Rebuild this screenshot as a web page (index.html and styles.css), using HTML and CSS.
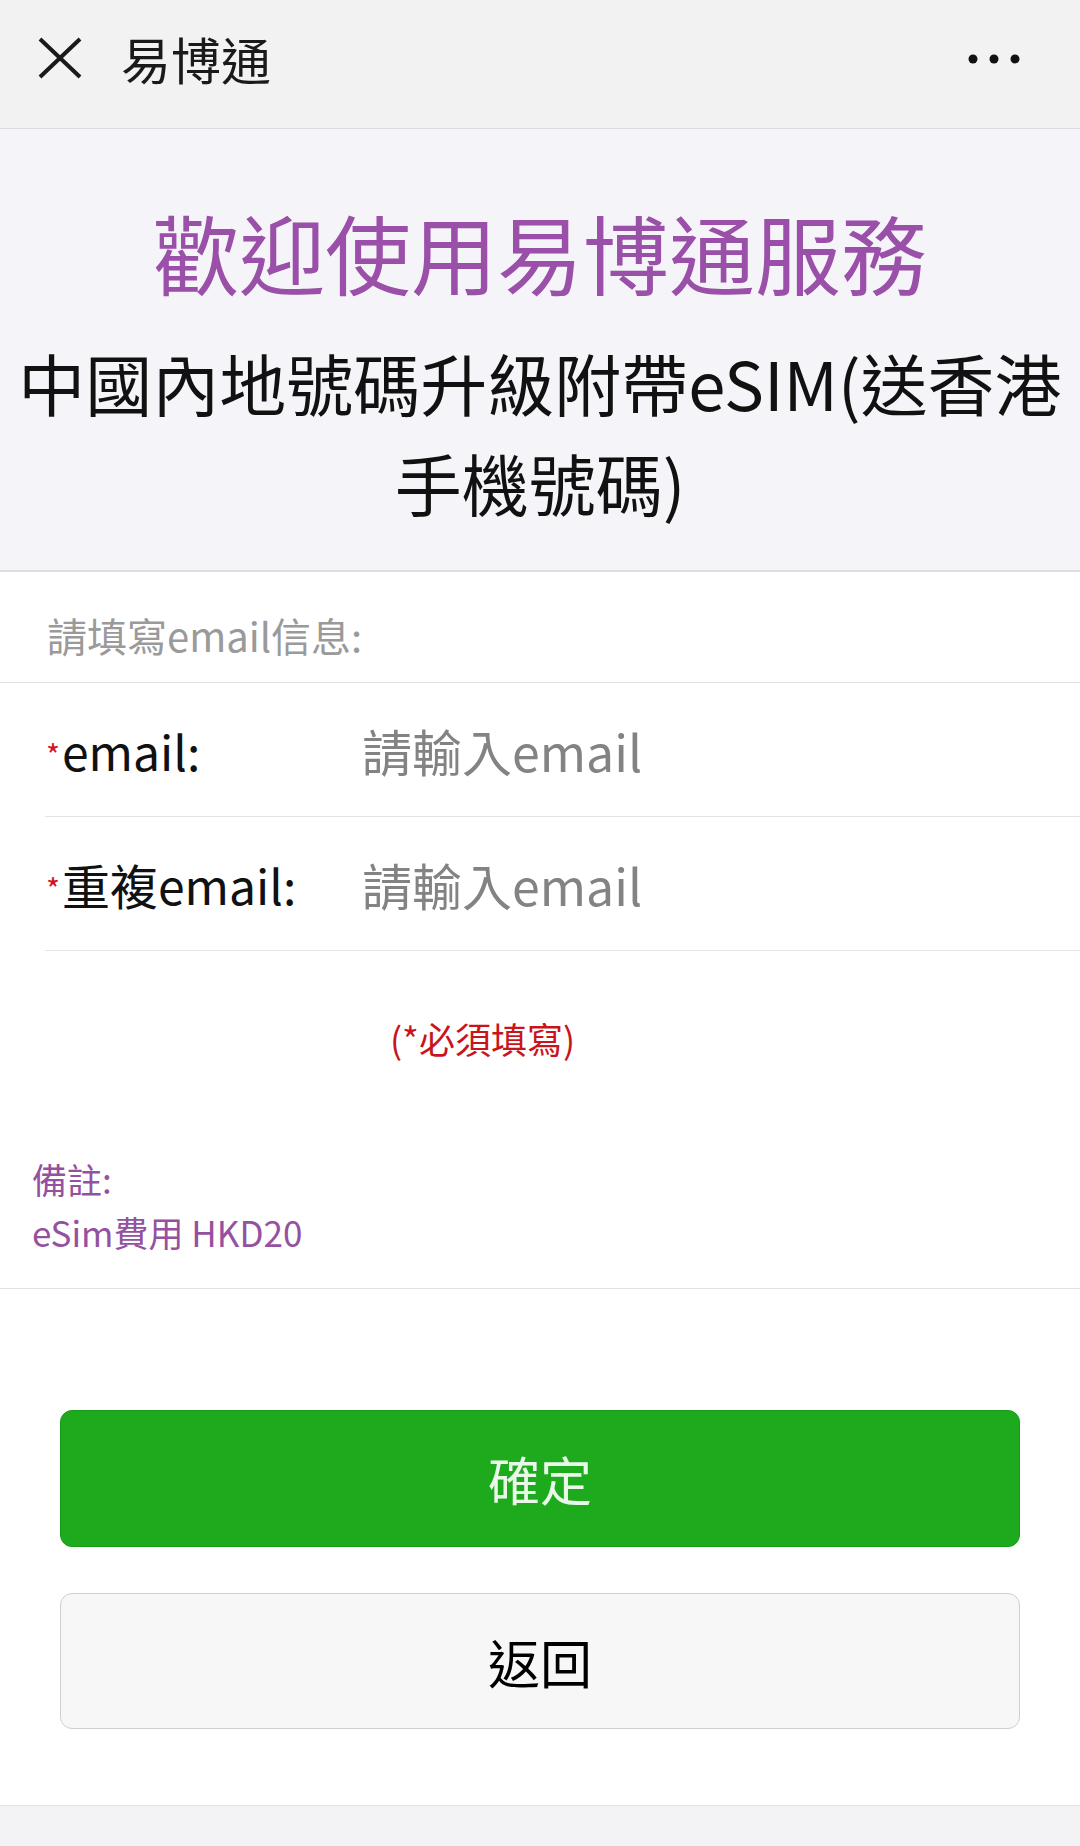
FILE: index.html
```html
<!DOCTYPE html>
<html lang="zh-Hant">
<head>
  <meta charset="UTF-8">
  <meta name="viewport" content="width=device-width, initial-scale=1.0">
  <title>易博通</title>
  <link rel="stylesheet" href="styles.css">
</head>
<body>
  <div class="page">
    <!-- Top bar -->
    <header class="topbar">
      <svg class="close-icon" viewBox="0 0 44 42" width="44" height="42">
        <path d="M2 2 L42 40 M42 2 L2 40" />
      </svg>
      <span class="topbar-title">易博通</span>
      <svg class="more-icon" viewBox="0 0 52 10" width="52" height="10">
        <circle cx="5" cy="5" r="4.5" />
        <circle cx="26" cy="5" r="4.5" />
        <circle cx="47" cy="5" r="4.5" />
      </svg>
    </header>

    <!-- Welcome -->
    <section class="hero">
      <h1 class="hero-title">歡迎使用易博通服務</h1>
      <h2 class="hero-sub">中國內地號碼升級附帶eSIM(送香港<br>手機號碼)</h2>
    </section>

    <!-- Email form -->
    <section class="form">
      <div class="form-caption">請填寫email信息:</div>
      <div class="field">
        <label for="email"><span class="star">*</span>email:</label>
        <input id="email" type="text" placeholder="請輸入email">
      </div>
      <div class="field">
        <label for="email2"><span class="star">*</span>重複email:</label>
        <input id="email2" type="text" placeholder="請輸入email">
      </div>
      <p class="required-note">(*必須填寫)</p>
      <div class="remark">
        備註:<br>
        eSim費用 HKD20
      </div>
    </section>

    <div class="actions">
      <button class="btn btn-primary">確定</button>
      <button class="btn btn-default">返回</button>
    </div>

    <footer class="bottom-bar"></footer>
  </div>
</body>
</html>
```

FILE: styles.css
```css
body {
  margin: 0;
  padding: 0;
  font-family: "Noto Sans CJK TC", "Noto Sans", sans-serif;
  background: #fff;
  color: #111;
}
.page {
  min-height: 100vh;
  display: flex;
  flex-direction: column;
}

/* top bar */
.topbar {
  height: 129px;
  box-sizing: border-box;
  padding: 0 60px 13px 38px;
  display: flex;
  align-items: center;
  background: #f2f2f2;
  border-bottom: 1px solid #dcdcdc;
}
.close-icon path {
  stroke: #1a1a1a;
  stroke-width: 4;
  fill: none;
}
.topbar-title {
  margin-left: 39px;
  font-size: 50px;
  line-height: 60px;
  color: #1a1a1a;
  flex: 1;
}
.more-icon {
  fill: #111;
  margin-top: 3px;
}

/* welcome block */
.hero {
  background: #f5f4f8;
  text-align: center;
  padding: 73px 4px 38px;
  border-bottom: 2px solid #dedce2;
}
.hero-title {
  margin: 0;
  font-size: 86px;
  line-height: 100px;
  font-weight: normal;
  color: #9a4fa8;
}
.hero-sub {
  margin: 30px 0 0;
  font-size: 67px;
  line-height: 100px;
  font-weight: normal;
  color: #111;
  white-space: nowrap;
}

/* form */
.form {
  border-bottom: 1px solid #e2e2e2;
}
.form-caption {
  padding: 38px 47px 22px;
  font-size: 40px;
  line-height: 50px;
  color: #9a9a9a;
  border-bottom: 1px solid #e2e2e2;
}
.field {
  margin-left: 45px;
  height: 133px;
  display: flex;
  align-items: center;
  border-bottom: 1px solid #e4e4e4;
}
.field label {
  width: 317px;
  flex-shrink: 0;
  padding-left: 1px;
  box-sizing: border-box;
  font-size: 48px;
  color: #111;
}
.star {
  color: #d0161e;
  font-size: 30px;
  margin-right: 2px;
  vertical-align: 4px;
}
.field input {
  flex: 1;
  border: none;
  outline: none;
  background: transparent;
  font-family: inherit;
  font-size: 50px;
  padding: 0;
  color: #111;
}
.field input::placeholder {
  color: #838383;
}
.required-note {
  margin: 62px 0 0;
  padding-right: 115px;
  text-align: center;
  font-size: 36px;
  line-height: 50px;
  color: #c8151c;
}
.remark {
  margin-top: 89px;
  padding: 0 32px 30px;
  font-size: 35px;
  line-height: 53px;
  color: #95519f;
}

/* buttons */
.actions {
  padding: 121px 60px 76px;
  display: flex;
  flex-direction: column;
  gap: 46px;
}
.btn {
  height: 137px;
  border-radius: 12px;
  font-family: inherit;
  font-size: 52px;
  cursor: pointer;
}
.btn-primary {
  background: #1dab1d;
  border: 1px solid #179a17;
  color: #eaf8ea;
}
.btn-default {
  height: 136px;
  background: #f7f7f7;
  border: 1px solid #cfcfcf;
  color: #000;
}

.bottom-bar {
  flex: 1;
  background: #f3f2f5;
  border-top: 1px solid #e2e2e2;
}
```
